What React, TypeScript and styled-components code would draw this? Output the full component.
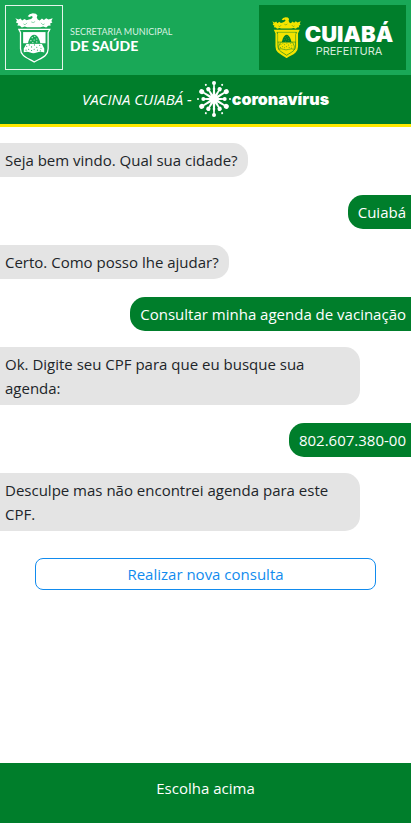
import React from "react";
import styled, { createGlobalStyle } from "styled-components";

const GREEN = "#007e2b";
const LIGHT_GREEN = "#19a857";

const GlobalStyle = createGlobalStyle`
  *, *::before, *::after { box-sizing: border-box; }
  body {
    margin: 0;
    background: #fff;
    color: #212529;
    font-family: "Open Sans", "Noto Sans", sans-serif;
    font-size: 15px;
    line-height: 24px;
  }
`;

const Page = styled.div`
  display: flex;
  flex-direction: column;
  min-height: 100vh;
`;

const LogoBar = styled.header`
  display: flex;
  justify-content: space-between;
  padding: 5px;
  background: ${LIGHT_GREEN};
  color: #fff;
`;

const HealthLogo = styled.div`
  display: flex;
  align-items: center;
  gap: 7px;
`;

const CrestFrame = styled.div`
  display: flex;
  align-items: center;
  justify-content: center;
  width: 58px;
  height: 65px;
  border: 1px solid #e4f5eb;
`;

const HealthName = styled.div`
  display: flex;
  flex-direction: column;
  font-family: Lato, sans-serif;
`;

const HealthSmall = styled.span`
  font-size: 9px;
  line-height: 16px;
  color: #d8f1e2;
`;

const HealthLarge = styled.strong`
  font-size: 14px;
  line-height: 12px;
  font-weight: 900;
`;

const CityLogo = styled.div`
  display: flex;
  align-items: center;
  justify-content: center;
  gap: 4px;
  width: 147px;
  height: 65px;
  background: ${GREEN};
`;

const CityName = styled.div`
  display: flex;
  flex-direction: column;
  align-items: center;
  padding-top: 4px;
  font-family: Inter, sans-serif;
`;

const CityLarge = styled.strong`
  font-size: 22px;
  line-height: 22px;
  font-weight: 900;
`;

const CitySmall = styled.span`
  font-size: 11px;
  line-height: 12px;
  color: #d3ead9;
`;

const TitleBar = styled.div`
  display: flex;
  align-items: center;
  justify-content: center;
  height: 52px;
  padding-bottom: 2px;
  background: ${GREEN};
  border-bottom: 3px solid #ffe800;
  color: #fff;
`;

const Title = styled.h1`
  margin: 0 4px 0 0;
  font-size: 15px;
  font-weight: 400;
  font-style: italic;
`;

const CampaignName = styled.strong`
  font-family: Inter, sans-serif;
  font-size: 16px;
  font-weight: 900;
`;

const Chat = styled.main`
  display: flex;
  flex-direction: column;
  flex: 1;
  padding-top: 16px;
`;

const Bubble = styled.p<{ $mine?: boolean }>`
  align-self: ${(p) => (p.$mine ? "flex-end" : "flex-start")};
  max-width: 360px;
  margin: ${(p) => (p.$mine ? "18px 0 16px" : "0")};
  padding: ${(p) => (p.$mine ? "5px 5px 5px 10px" : "5px 10px 5px 5px")};
  border-radius: ${(p) => (p.$mine ? "15px 0 0 15px" : "0 15px 15px 0")};
  background: ${(p) => (p.$mine ? GREEN : "#e4e4e4")};
  color: ${(p) => (p.$mine ? "#fff" : "#212529")};
`;

const OptionButton = styled.button`
  margin: 27px 35px 0;
  height: 32px;
  padding: 0;
  border: 1px solid #118bee;
  border-radius: 8px;
  background: #fff;
  color: #118bee;
  font: inherit;
  cursor: pointer;
`;

const Footer = styled.footer`
  height: 60px;
  padding-top: 13px;
  background: ${GREEN};
  color: #fff;
  text-align: center;
`;

type CrestProps = {
  ink: string;
  ground: string;
  filled?: boolean;
  width: number;
  height: number;
};

const grains = [
  [79, 138], [87, 134], [94, 140], [85, 147], [94, 151], [77, 150], [103, 134],
  [110, 141], [102, 147], [112, 150], [119, 135], [123, 144], [121, 152],
];
const domeGrains = [
  [96, 112], [104, 108], [110, 116], [92, 121], [102, 119], [98, 127], [110, 125],
];

function Crest({ ink, ground, filled, width, height }: CrestProps) {
  return (
    <svg
      width={width}
      height={height}
      viewBox="43 37 117 152"
      preserveAspectRatio="none"
      aria-hidden="true"
    >
      <path
        fill={ink}
        d="M44 53L54 57L60 54L65 60L72 55L79 59L86 57L93 55L98 49L94 46L88 49L82 47L88 41L98 38L107 39L112 44L110 51L113 57L119 60L126 54L132 58L139 53L146 57L159 53L155 61L158 66L151 69L153 75L145 76L139 81L130 78L121 80H80L73 78L64 81L58 76L50 75L53 69L46 66L49 60Z"
      />
      <path
        fill="none"
        stroke={ground}
        strokeWidth="1.5"
        d="M69 70L74 73L80 67M123 67L129 73L134 70M93 64Q99 69 105 63"
      />
      <path
        fill={filled ? ink : ground}
        stroke={ink}
        strokeWidth={filled ? 6 : 4}
        d="M55 87H150L145 97V146C145 168 125 173 102 186C80 173 60 168 60 146V97Z"
      />
      {filled && (
        <path
          fill="none"
          stroke={ground}
          strokeWidth="2.5"
          d="M63 94H142L138 102V145C138 162 122 167 102 179C83 167 67 162 67 145V102Z"
        />
      )}
      <path fill={ink} d="M68 95H137V129H68Z" />
      {filled && <path fill="none" stroke={ground} strokeWidth="2" d="M66 130H138" />}
      <path fill={ground} d="M83 130C84 121 88 113 93 107Q102 99 111 107C116 113 120 121 121 130Z" />
      <path
        fill={ink}
        stroke={filled ? ground : ink}
        strokeWidth={filled ? 2 : 0}
        d="M78 131H126L133 145V157Q121 153 110 157T90 157T70 156V145Z"
      />
      {grains.map(([x, y]) => (
        <circle key={`${x}-${y}`} cx={x} cy={y} r="1.7" fill={ground} />
      ))}
      {domeGrains.map(([x, y]) => (
        <circle key={`${x}-${y}`} cx={x} cy={y} r={filled ? 1 : 1.8} fill={ink} />
      ))}
    </svg>
  );
}

const innerBulbs = [30, 150, 210, 330];
const wideBulbs = [59, 121, 239, 301];
const sideBulbs = [90, 270];
const outerDots = [30, 150, 210, 330];

function Virus() {
  return (
    <svg width="36" height="38" viewBox="-54 -57 108 114" fill="#fff" aria-hidden="true">
      <circle r="14" />
      {[0, 180].map((a) => (
        <g key={a} transform={`rotate(${a})`}>
          <path d="M-4 -8L-2 -48H2L4 -8Z" />
          <circle cy="-48" r="6" />
          <circle cy="-30" r="4" />
        </g>
      ))}
      {innerBulbs.map((a) => (
        <g key={a} transform={`rotate(${a})`}>
          <path d="M-4 -8L-2 -34H2L4 -8Z" />
          <circle cy="-34" r="6.5" />
        </g>
      ))}
      {wideBulbs.map((a) => (
        <g key={a} transform={`rotate(${a})`}>
          <path d="M-4 -8L-2 -44H2L4 -8Z" />
          <circle cy="-43" r="7.5" />
        </g>
      ))}
      {sideBulbs.map((a) => (
        <g key={a} transform={`rotate(${a})`}>
          <path d="M-4 -8L-2 -32H2L4 -8Z" />
          <circle cy="-32" r="6" />
          <circle cy="-48" r="3" />
        </g>
      ))}
      {outerDots.map((a) => (
        <circle key={a} cy="-49" r="3" transform={`rotate(${a})`} />
      ))}
    </svg>
  );
}

const messages = [
  { text: "Seja bem vindo. Qual sua cidade?" },
  { text: "Cuiabá", mine: true },
  { text: "Certo. Como posso lhe ajudar?" },
  { text: "Consultar minha agenda de vacinação", mine: true },
  { text: "Ok. Digite seu CPF para que eu busque sua agenda:" },
  { text: "802.607.380-00", mine: true },
  { text: "Desculpe mas não encontrei agenda para este CPF." },
];

export default function App() {
  return (
    <Page>
      <GlobalStyle />
      <LogoBar>
        <HealthLogo>
          <CrestFrame>
            <Crest ink="#fff" ground={LIGHT_GREEN} width={38} height={50} />
          </CrestFrame>
          <HealthName>
            <HealthSmall>SECRETARIA MUNICIPAL</HealthSmall>
            <HealthLarge>DE SAÚDE</HealthLarge>
          </HealthName>
        </HealthLogo>
        <CityLogo>
          <Crest ink="#f4e400" ground={GREEN} filled width={29} height={41} />
          <CityName>
            <CityLarge>CUIABÁ</CityLarge>
            <CitySmall>PREFEITURA</CitySmall>
          </CityName>
        </CityLogo>
      </LogoBar>
      <TitleBar>
        <Title>VACINA CUIABÁ -</Title>
        <Virus />
        <CampaignName>coronavírus</CampaignName>
      </TitleBar>
      <Chat>
        {messages.map((m) => (
          <Bubble key={m.text} $mine={m.mine}>
            {m.text}
          </Bubble>
        ))}
        <OptionButton type="button">Realizar nova consulta</OptionButton>
      </Chat>
      <Footer>Escolha acima</Footer>
    </Page>
  );
}
